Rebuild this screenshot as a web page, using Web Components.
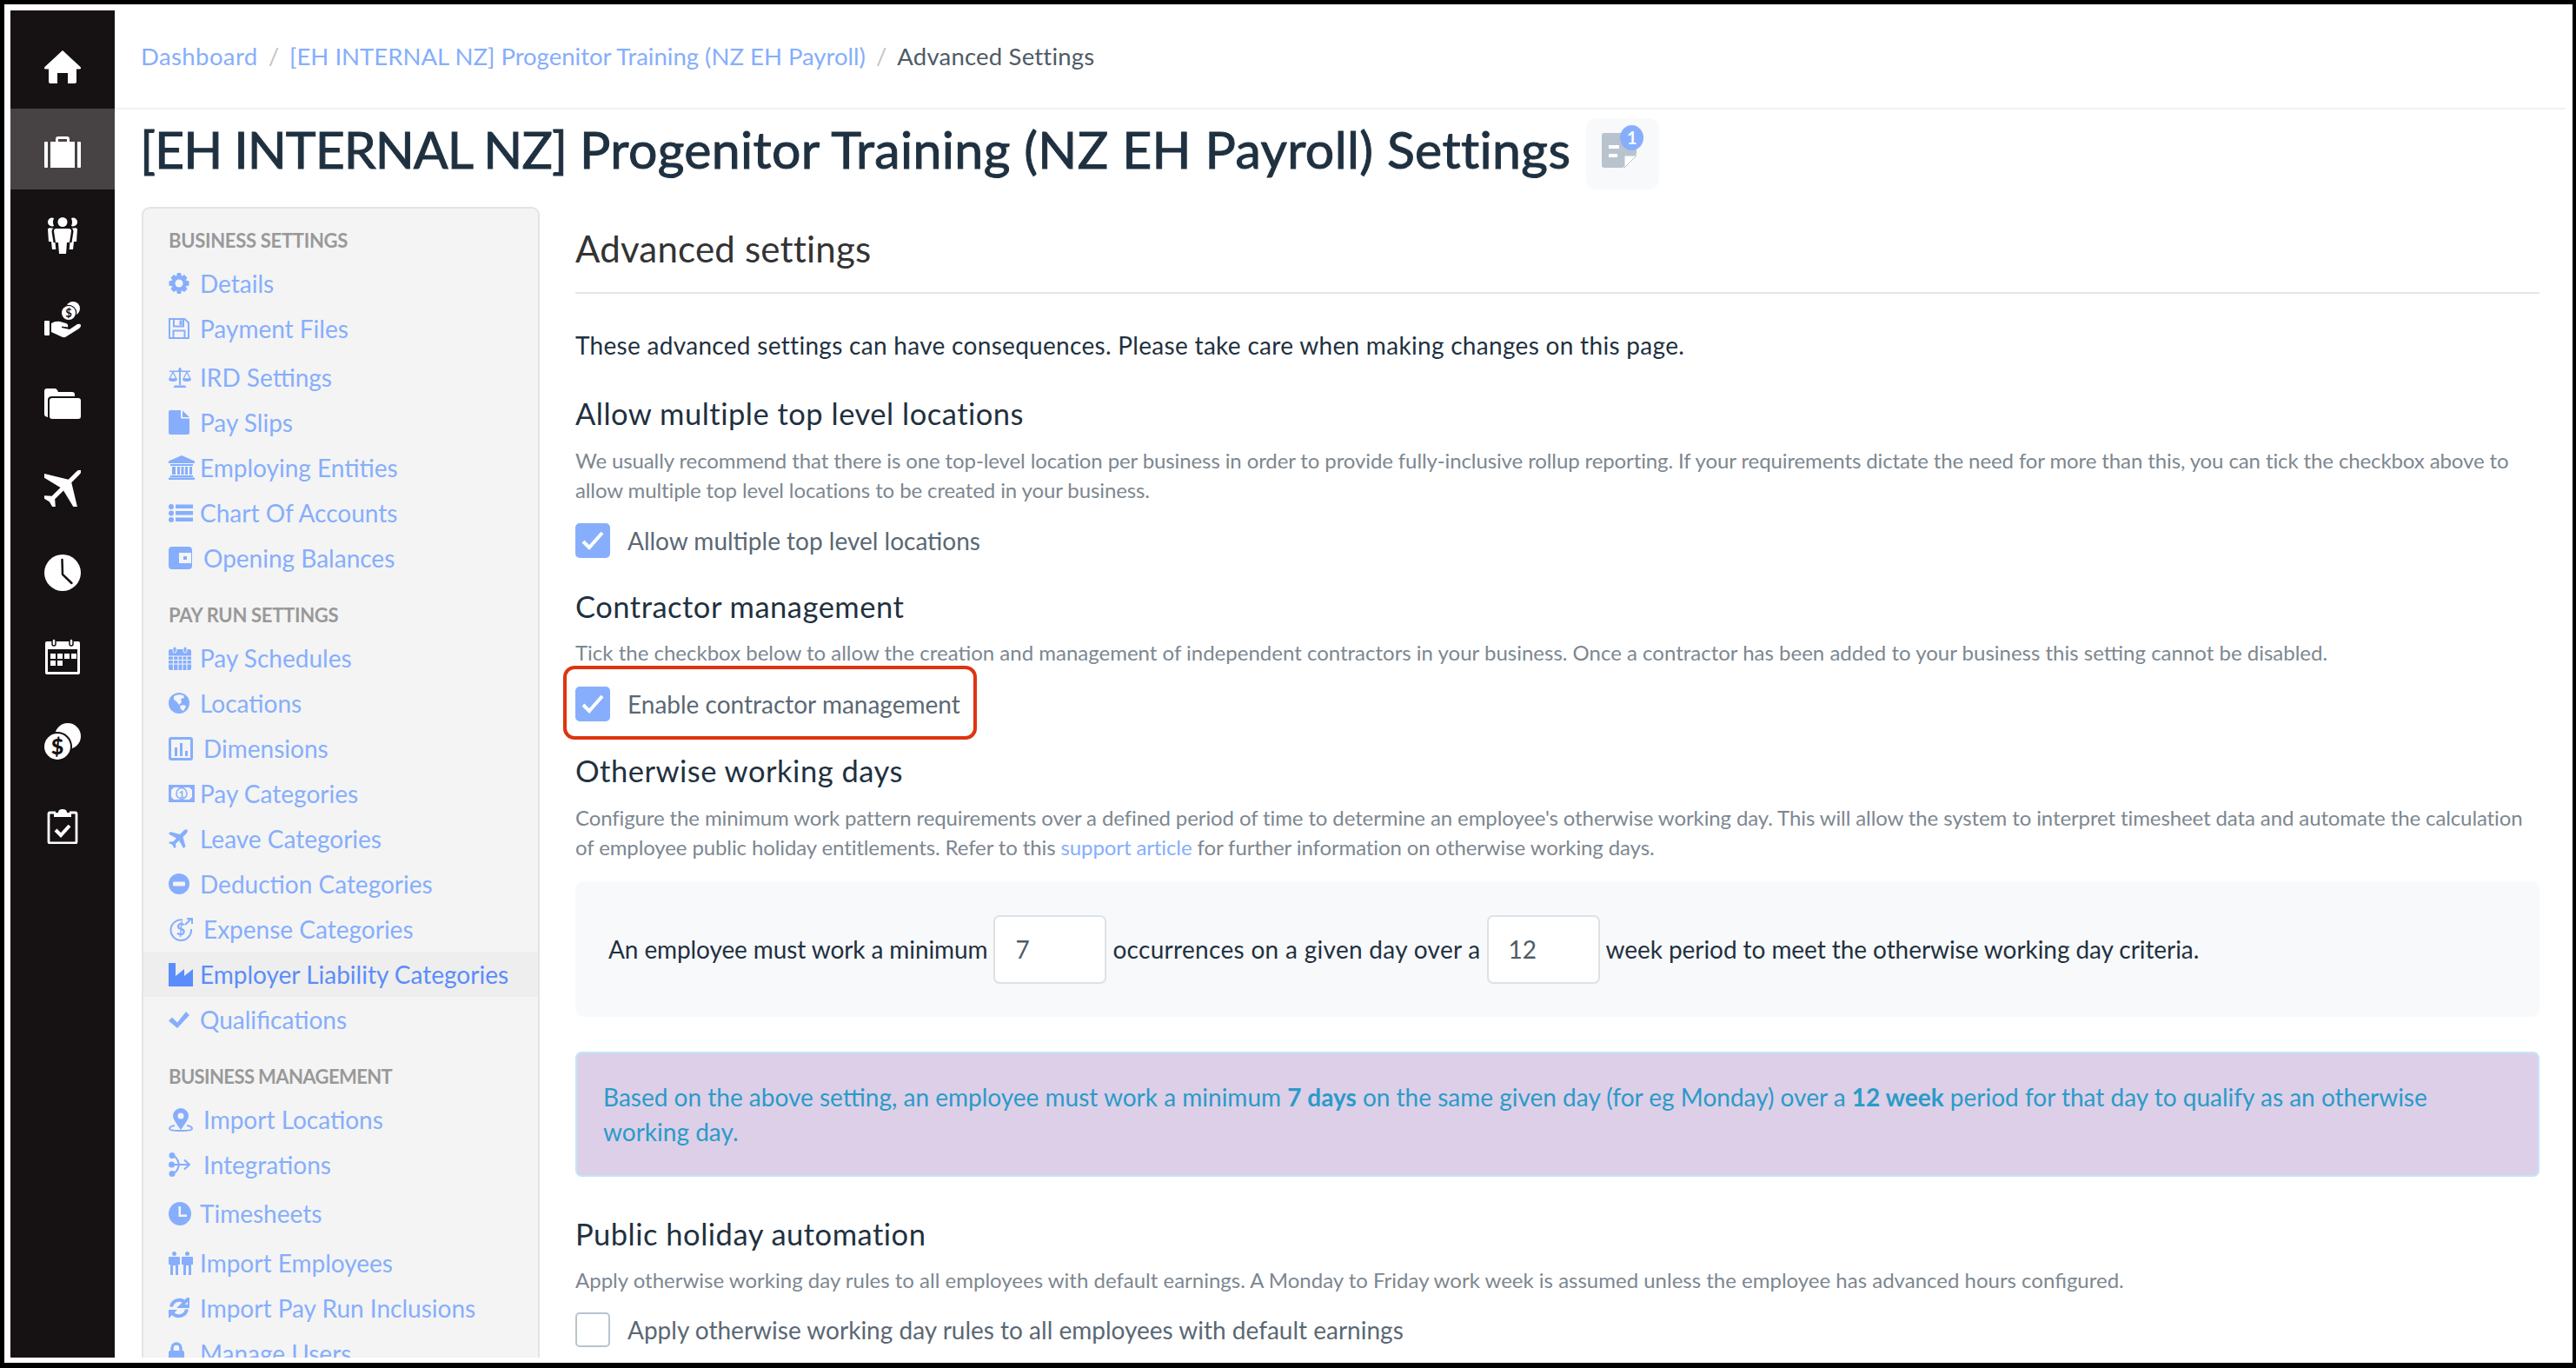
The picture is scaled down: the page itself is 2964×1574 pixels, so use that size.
<!DOCTYPE html>
<html lang="en">
<head>
<meta charset="utf-8">
<title>Advanced Settings</title>
<style>
  html, body { margin: 0; height: 100%; }
  body { background: #000; overflow: hidden; font-family: Lato, "Liberation Sans", sans-serif; }
  p { margin: 0; }
</style>
</head>
<body>
<app-frame>
  <nav-rail slot="rail">
    <rail-item icon="home"></rail-item>
    <rail-item icon="briefcase" active></rail-item>
    <rail-item icon="people3"></rail-item>
    <rail-item icon="handcoin"></rail-item>
    <rail-item icon="folder"></rail-item>
    <rail-item icon="plane"></rail-item>
    <rail-item icon="clockw"></rail-item>
    <rail-item icon="calw"></rail-item>
    <rail-item icon="coins"></rail-item>
    <rail-item icon="clipboard"></rail-item>
  </nav-rail>

  <bread-crumbs slot="crumbs">
    <a style="letter-spacing:.4px">Dashboard</a>
    <a>[EH INTERNAL NZ] Progenitor Training (NZ EH Payroll)</a>
    <span>Advanced Settings</span>
  </bread-crumbs>

  <page-title slot="title" count="1"><span style="letter-spacing:-1px">[EH INTERNAL NZ]</span> <span style="letter-spacing:.38px">Progenitor Training (NZ EH Payroll) Settings</span></page-title>

  <side-menu slot="menu">
    <menu-head>Business Settings</menu-head>
    <menu-item icon="gear">Details</menu-item>
    <menu-item icon="save">Payment Files</menu-item>
    <menu-item icon="scale" style="margin-top:4px">IRD Settings</menu-item>
    <menu-item icon="file">Pay Slips</menu-item>
    <menu-item icon="bank">Employing Entities</menu-item>
    <menu-item icon="list">Chart Of Accounts</menu-item>
    <menu-item icon="wallet" wide>Opening Balances</menu-item>
    <menu-head>Pay Run Settings</menu-head>
    <menu-item icon="cal">Pay Schedules</menu-item>
    <menu-item icon="globe">Locations</menu-item>
    <menu-item icon="chart" wide>Dimensions</menu-item>
    <menu-item icon="money">Pay Categories</menu-item>
    <menu-item icon="planes">Leave Categories</menu-item>
    <menu-item icon="minus">Deduction Categories</menu-item>
    <menu-item icon="expense" wide>Expense Categories</menu-item>
    <menu-item icon="factory" active>Employer Liability Categories</menu-item>
    <menu-item icon="check">Qualifications</menu-item>
    <menu-head style="letter-spacing:-.6px">Business Management</menu-head>
    <menu-item icon="pin" wide>Import Locations</menu-item>
    <menu-item icon="merge" wide>Integrations</menu-item>
    <menu-item icon="clock" style="margin-top:4px">Timesheets</menu-item>
    <menu-item icon="people2" style="margin-top:5px">Import Employees</menu-item>
    <menu-item icon="refresh">Import Pay Run Inclusions</menu-item>
    <menu-item icon="lock">Manage Users</menu-item>
  </side-menu>

  <settings-head>Advanced settings</settings-head>
  <p class="intro" style="margin:39px 0 0;font-size:28px;letter-spacing:.3px;line-height:40px;color:#1f3140">These advanced settings can have consequences. Please take care when making changes on this page.</p>

  <setting-section heading="Allow multiple top level locations" style="--top:37px;--body:21px;--track:-.11px">
    <span slot="desc">We usually recommend that there is one top-level location per business in order to provide fully-inclusive rollup reporting. If your requirements dictate the need for more than this, you can tick the checkbox above to<br>allow multiple top level locations to be created in your business.</span>
    <check-row checked>Allow multiple top level locations</check-row>
  </setting-section>

  <setting-section heading="Contractor management" style="--top:34px;--desc:14px">
    <span slot="desc">Tick the checkbox below to allow the creation and management of independent contractors in your business. Once a contractor has been added to your business this setting cannot be disabled.</span>
    <check-row checked highlight>Enable contractor management</check-row>
  </setting-section>

  <setting-section heading="Otherwise working days" style="--top:35px;--track:-.11px">
    <span slot="desc">Configure the minimum work pattern requirements over a defined period of time to determine an employee's otherwise working day. This will allow the system to interpret timesheet data and automate the calculation<br>of employee public holiday entitlements. Refer to this <a style="color:#86aefc">support article</a> for further information on otherwise working days.</span>
    <work-pattern minimum="7" weeks="12"></work-pattern>
  </setting-section>

  <info-alert>Based on the above setting, an employee must work a minimum <b>7 days</b> on the same given day (for eg Monday) over a <b>12 week</b> period for that day to qualify as an otherwise<br>working day.</info-alert>

  <setting-section heading="Public holiday automation" style="--top:44px;--desc:14px;--body:20px">
    <span slot="desc">Apply otherwise working day rules to all employees with default earnings. A Monday to Friday work week is assumed unless the employee has advanced hours configured.</span>
    <check-row>Apply otherwise working day rules to all employees with default earnings</check-row>
  </setting-section>
</app-frame>

<script>
const BG = '#f4f4f4';
const DK = '#161213';
const ICONS = {
  // rail, white
  home: [42, 42, `<path d="M21 2L41.500 21q1.500 2-1 2.500H37V38q0 2-2 2h-8V28H15v12H7q-2 0-2-2V23.500H1.500q-2.500-.5-1-2.500z"/>`],
  briefcase: [42, 42, `<path fill-rule="evenodd" d="M7 10h6V7q0-3 3-3h10q3 0 3 3v3h6v30H7zM16 10h10V7H16z"/><rect x="0" y="10" width="4" height="30" rx="1"/><rect x="38" y="10" width="4" height="30" rx="1"/>`],
  people3: [42, 42, `<circle cx="21" cy="5.500" r="5.500"/><path d="M9 .5a5 5 0 0 0 0 10q1.500 0 2-.7-2-4 0-8.600Q10 .5 9 .5zM33 .5a5 5 0 0 1 0 10q-1.500 0-2-.7 2-4 0-8.600Q32 .5 33 .5z"/><path d="M14 13h14q3 0 3 3l-2 13h-3l-1 13h-8l-1-13h-3l-2-13q0-3 3-3z"/><path d="M7 12.500h3.500q-2 1-2 4l2 12.500h2l.8 8h-4.300l-1-9H5l-1-14.500q0-1 3-1.500zM35 12.500h-3.500q2 1 2 4l-2 12.500h-2l-.8 8h4.300l1-9H37l1-14.500q0-1-3-1.500z"/>`],
  handcoin: [42, 42, `<rect x="0" y="22" width="6" height="17" rx="1"/><path d="M8 25q5-3 10-2l7 2q3 1 2 4.500l-7-1v1.500l9 2 9-6q3-1 4 1 .5 2-2 4L24 41q-2 .5-4-.5L8 35z"/><circle cx="33" cy="8" r="8"/><circle cx="28" cy="13" r="9.300" fill="${DK}"/><circle cx="28" cy="13" r="8"/><text x="28" y="18" font-size="13" font-weight="700" text-anchor="middle" fill="${DK}" font-family="Lato">$</text>`],
  folder: [42, 42, `<path d="M0 6q0-3 3-3h9q2 0 3 2l1 2h16q3 0 3 3v2H9q-5 0-5 4v20q-4-1-4-3z"/><path d="M9 14h30q3 0 3 3v18q0 3-3 3H9q-3 0-3-3V17q0-3 3-3z"/>`],
  plane: [42, 42, `<g transform="translate(21 21) rotate(45)"><path d="M0-30q2.500 0 2.500 6v12L27 3v4L2.500 1v14l7 6v3L0 21.500-9.500 24v-3l7-6V1L-27 7V3L-2.500-12v-12q0-6 2.500-6z"/></g>`],
  clockw: [42, 42, `<circle cx="21" cy="21" r="21"/><path d="M20.500 6l.5 17 10.500 10" fill="none" stroke="${DK}" stroke-width="2.500" stroke-linecap="round"/>`],
  calw: [42, 42, `<rect x="1" y="3" width="40" height="38" rx="2"/><rect x="4" y="12" width="34" height="26" fill="${DK}"/><rect x="9" y="0" width="4" height="8" rx="2" stroke="${DK}" stroke-width="1.500"/><rect x="29" y="0" width="4" height="8" rx="2" stroke="${DK}" stroke-width="1.500"/><path d="M7 17h6v6H7zM15 17h6v6h-6zM23 17h6v6h-6zM31 17h6v6h-6zM7 25h6v6H7zM15 25h6v6h-6z"/>`],
  coins: [42, 42, `<circle cx="27" cy="15" r="15"/><circle cx="15" cy="27" r="17" fill="${DK}"/><circle cx="15" cy="27" r="15"/><text x="15" y="36" font-size="25" font-weight="900" text-anchor="middle" fill="${DK}" font-family="Lato">$</text>`],
  clipboard: [42, 42, `<path d="M13 6H6.500q-1.500 0-1.500 1.500V39.500q0 1.500 1.500 1.500h29q1.500 0 1.500-1.500V7.500Q37 6 35.500 6H29" fill="none" stroke="#fff" stroke-width="2.800"/><path d="M11 9V6h5q0-4 5-4t5 4h5v5H11z"/><path d="M13 26l6 6 10-11" fill="none" stroke="#fff" stroke-width="4"/>`],
  // side menu, currentColor
  gear: [24, 24, `<path d="M10 0h4l1 4 3-2 3.500 3.500-2 3 4 1v5l-4 1 2 3L18 22l-3-2-1 4h-4l-1-4-3 2-3.500-3.500 2-3-4-1v-5l4-1-2-3L6 2l3 2z"/><circle cx="12" cy="12" r="4.500" fill="${BG}"/>`],
  save: [24, 24, `<path d="M1 1h17.500L23 5.500V23H1z" fill="none" stroke="currentColor" stroke-width="2"/><path d="M6 1.500v8h11v-8" fill="none" stroke="currentColor" stroke-width="2"/><path d="M12.500 2.500h3v5.500h-3z"/><path d="M5.500 23v-8.500h13V23" fill="none" stroke="currentColor" stroke-width="2"/>`],
  scale: [26, 24, `<path d="M12 1h2v20h-2zM1 4.500h24v1.500H1zM7 21.500h12l1.500 2.500h-15z"/><circle cx="13" cy="4" r="2"/><path d="M5 6l4 8H1zM21 6l4 8h-8z" fill="none" stroke="currentColor" stroke-width="1.300"/><path d="M0 14h10q0 3-5 3t-5-3zM16 14h10q0 3-5 3t-5-3z"/>`],
  file: [24, 28, `<path d="M0 2q0-2 2-2h12v8q0 1.500 1.500 1.500H24V26q0 2-2 2H2q-2 0-2-2z"/><path d="M16 0.500l8 7.500h-8z"/>`],
  bank: [30, 28, `<path d="M15 0l15 6.500V9H0V6.500zM2 10h26v2H2zM4 13h4v9H4zM10 13h3v9h-3zM14.500 13h3v9h-3zM19 13h3v9h-3zM24 13h3v9h-3zM2 23h26v2H2zM0 25.500h30V28H0z"/>`],
  list: [28, 21, `<circle cx="3" cy="3" r="3"/><circle cx="3" cy="10.500" r="3"/><circle cx="3" cy="18" r="3"/><path d="M8 .5h20v4.500H8zM8 8h20v4.500H8zM8 15.500h20V20H8z"/>`],
  wallet: [28, 27, `<rect width="27" height="26" rx="4"/><rect x="12" y="7" width="14" height="12" fill="${BG}"/><rect x="17" y="11" width="4" height="4"/>`],
  cal: [26, 27, `<rect x="0" y="3" width="26" height="24" rx="2"/><path d="M0 11h26M0 15.500h26M0 20h26M5.500 11v16M11 11v16M16 11v16M21 11v16" stroke="${BG}" stroke-width="1.100"/><rect x="5" y="0" width="4" height="7" rx="2" stroke="${BG}"/><rect x="17" y="0" width="4" height="7" rx="2" stroke="${BG}"/>`],
  globe: [24, 24, `<circle cx="12" cy="12" r="12"/><path d="M6 4q5-3 11-1l1 3-4 1 1 4-3 3-3-4-3-2zM13 15l5-1 2 2-3 5-3-2z" fill="${BG}"/>`],
  chart: [28, 27, `<path fill-rule="evenodd" d="M3 0h22q3 0 3 3v21q0 3-3 3H3q-3 0-3-3V3q0-3 3-3zM3 3v21h22V3z"/><path d="M7 12h3v10H7zM13 7h3v15h-3zM19 16h3v6h-3z"/>`],
  money: [30, 20, `<path fill-rule="evenodd" d="M0 0h30v20H0zM6 3L3 6v8l3 3h18l3-3V6l-3-3z"/><ellipse cx="15" cy="10" rx="6" ry="6.500" fill="${BG}" stroke="currentColor" stroke-width="1.500"/><text x="15" y="14.500" font-size="12" font-weight="700" text-anchor="middle" fill="currentColor" font-family="Lato">1</text>`],
  planes: [22, 22, `<path d="M21.500.5q1 2-1 4.500l-4 4 3 11-2.500 2-5-9-4 4 .5 3.500-1.800 1.800-2.500-4.500L0 16l1.800-1.800L5 14.500l4-4L0 5.500l2-2.500 11 3 4-4q2.500-2.500 4.500-1.500z"/>`],
  minus: [24, 24, `<circle cx="12" cy="12" r="12"/><rect x="5" y="9.500" width="14" height="5" rx="1" fill="${BG}"/>`],
  expense: [28, 27, `<path d="M16 2.500A11.800 11.800 0 1 0 26 13" fill="none" stroke="currentColor" stroke-width="2"/><path d="M19 8l7-7M21 1h6v6" fill="none" stroke="currentColor" stroke-width="2"/><text x="14" y="20" font-size="18" font-weight="700" text-anchor="middle" fill="currentColor" font-family="Lato">$</text>`],
  factory: [28, 27, `<path d="M0 0h8v15l10-8v8l10-8v20H0z"/>`],
  check: [24, 19, `<path d="M0 10.500L4 6.500l6 6L20 0l4 4L10 19z"/>`],
  pin: [28, 27, `<path fill-rule="evenodd" d="M14 0a9 9 0 0 1 9 9q0 4-9 16-9-12-9-16a9 9 0 0 1 9-9zM14 5.500a3.500 3.500 0 1 0 0 7 3.500 3.500 0 0 0 0-7z"/><path d="M7 20Q1 21 1 23.500 1 26 14 26t13-2.500Q27 21 21 20" fill="none" stroke="currentColor" stroke-width="2"/>`],
  merge: [25, 28, `<circle cx="4" cy="3.500" r="3.500"/><circle cx="3.500" cy="14" r="3.500"/><circle cx="4" cy="24.500" r="3.500"/><path d="M4 3.500q6 1 8 10.500M4 24.500q6-1 8-10.500M3 14h19M18 8.500l6 5.500-6 5.500" fill="none" stroke="currentColor" stroke-width="2.200"/>`],
  clock: [26, 27, `<ellipse cx="13" cy="13.500" rx="13" ry="13.500"/><path d="M11.500 5h2.500v9.500H21V17h-9.500z" fill="${BG}"/>`],
  people2: [28, 27, `<circle cx="6.500" cy="2.500" r="2.500"/><circle cx="21.500" cy="2.500" r="2.500"/><path d="M1 6h11q1 0 1 1v8h-2v12H8V16H5v11H2V15H0V7q0-1 1-1zM16 6h11q1 0 1 1v8h-2v12h-3V16h-3v11h-3V15h-2V7q0-1 1-1z"/>`],
  refresh: [24, 24, `<path d="M3 10.500A9.500 9.500 0 0 1 19.500 6" fill="none" stroke="currentColor" stroke-width="4"/><path d="M24 0v10H14zM21 13.500A9.500 9.500 0 0 1 4.500 18" fill="none" stroke="currentColor" stroke-width="4"/><path d="M0 24V14h10z"/>`],
  lock: [18, 26, `<path d="M4 11V7a5 5 0 0 1 10 0v4" fill="none" stroke="currentColor" stroke-width="3.500"/><rect x="0" y="10" width="18" height="16" rx="2"/>`]
};

function iconSvg(name, scale = 1) {
  const [w, h, body] = ICONS[name];
  return `<svg width="${w * scale}" height="${h * scale}" viewBox="0 0 ${w} ${h}" fill="currentColor" style="display:block;flex:none">${body}</svg>`;
}

function define(tag, css, html, setup) {
  customElements.define(tag, class extends HTMLElement {
    connectedCallback() {
      if (this.shadowRoot) return;
      this.attachShadow({ mode: 'open' });
      this.shadowRoot.innerHTML = `<style>${css}</style>` + (typeof html === 'function' ? html(this) : html);
      if (setup) setup(this);
    }
  });
}

define('app-frame', `
  :host { display: block; height: 1574px; box-sizing: border-box; padding: 5px 4px 6px 5px; }
  .sheet { height: 100%; box-sizing: border-box; padding: 7px 8px 6px 7px; background: #fff; display: flex; }
  .main { flex: 1; min-width: 0; display: flex; flex-direction: column; }
  .crumbs { height: 104px; padding-bottom: 8px; flex: none; border-bottom: 2px solid #f2f2f2; display: flex; align-items: center; padding-left: 30px; }
  .title { flex: none; height: 112px; padding-left: 29px; display: flex; align-items: center; }
  .body { flex: 1; min-height: 0; display: flex; gap: 41px; padding: 0 30px 0 31px; overflow: hidden; }
  .menu { flex: none; width: 458px; display: flex; min-height: 0; }
  .content { flex: 1; min-width: 0; }
`, `
  <div class="sheet">
    <slot name="rail"></slot>
    <div class="main">
      <div class="crumbs"><slot name="crumbs"></slot></div>
      <div class="title"><slot name="title"></slot></div>
      <div class="body">
        <div class="menu"><slot name="menu"></slot></div>
        <div class="content"><slot></slot></div>
      </div>
    </div>
  </div>`);

define('nav-rail', `
  :host { display: flex; flex-direction: column; flex: none; width: 120px; box-sizing: border-box; padding-top: 16px; gap: 4px; background: ${DK}; }
`, `<slot></slot>`);

define('rail-item', `
  :host { display: flex; height: 93px; box-sizing: border-box; padding-top: 5px; align-items: center; justify-content: center; color: #fff; }
  :host([active]) { background: #474344; }
`, el => iconSvg(el.getAttribute('icon')));

define('bread-crumbs', `
  :host { display: flex; font-size: 27.500px; color: #4f5b66; }
  ::slotted(a) { color: #86aefc; }
  ::slotted(a)::after { content: "/"; color: #c4c4c4; margin: 0 12px; letter-spacing: 0; }
  ::slotted(span) { letter-spacing: .2px; }
`, `<slot></slot>`);

define('page-title', `
  :host { display: flex; align-items: center; height: 92px; margin-bottom: 22px; font-size: 59px; -webkit-text-stroke: 1px #1f3140; color: #1f3140; white-space: pre; }
  .badge { position: relative; margin-left: 18px; width: 84px; height: 82px; margin-top: 12px; background: #f8f9fb; border-radius: 12px; flex: none; -webkit-text-stroke: 0; }
  .doc { position: absolute; left: 18px; top: 17px; }
  .count { position: absolute; left: 39px; top: 8px; width: 27px; height: 29px; border-radius: 50%; background: #86aefc; color: #fff; font-size: 20px; font-weight: 700; line-height: 29px; text-align: center; }
  .t { white-space: pre; }
`, el => `<span class="t"><slot></slot></span>
  <span class="badge">
    <svg class="doc" width="40" height="40" viewBox="0 0 40 40"><path d="M3 0h37v24L24 40H3q-3 0-3-3V3q0-3 3-3z" fill="#b9c3cd"/><path d="M8 14h12v4H8zM8 24h10v4H8z" fill="#fff"/><path d="M26 26h14L26 40z" fill="#fff" stroke="#b9c3cd"/></svg>
    <span class="count">${el.getAttribute('count')}</span>
  </span>`);

define('side-menu', `
  :host { display: block; width: 100%; box-sizing: border-box; padding-top: 14px; background: ${BG}; border: 2px solid #e4e4e4; border-bottom: 0; border-radius: 9px 9px 0 0; overflow: hidden; }
`, `<slot></slot>`);

define('menu-head', `
  :host { display: block; height: 46px; line-height: 46px; margin-top: 17px; padding-left: 29px; font-size: 22px; font-weight: 700; letter-spacing: -.3px; color: #999; text-transform: uppercase; }
  :host(:first-child) { margin-top: 0; }
`, `<slot></slot>`);

define('menu-item', `
  :host { display: flex; height: 52px; align-items: center; padding-left: 29px; font-size: 28px; color: #86aefc; white-space: nowrap; }
  :host([active]) { background: #eee; color: #5b8cfb; }
  .slot { flex: none; width: 36px; }
  :host([wide]) .slot { width: 40px; }
`, el => `<span class="slot">${iconSvg(el.getAttribute('icon'))}</span><slot></slot>`);

define('settings-head', `
  :host { display: block; height: 100px; box-sizing: border-box; line-height: 96px; border-bottom: 2px solid #e6e6e6; font-size: 42px; letter-spacing: .2px; color: #333; }
`, `<slot></slot>`);

define('setting-section', `
  :host { display: block; margin-top: var(--top, 34px); }
  h3 { margin: 0; font-size: 34.500px; letter-spacing: .5px; font-weight: 400; line-height: 44px; color: #1f3140; }
  .desc { margin-top: var(--desc, 15px); font-size: 24px; letter-spacing: var(--track, 0); line-height: 34px; color: #7d8790; white-space: nowrap; }
  .body { margin-top: var(--body, 22px); }
`, el => `<h3>${el.getAttribute('heading')}</h3><div class="desc"><slot name="desc"></slot></div><div class="body"><slot></slot></div>`);

define('check-row', `
  :host { display: flex; width: fit-content; position: relative; align-items: center; gap: 20px; height: 40px; font-size: 28px; color: #5a6874; white-space: nowrap; }
  .box { width: 40px; height: 40px; box-sizing: border-box; border-radius: 5px; border: 2px solid #b9c3cd; background: #fff; flex: none; display: flex; align-items: center; justify-content: center; }
  :host([checked]) .box { background: #86aefc; border-color: #86aefc; }
  svg { display: none; }
  :host([checked]) svg { display: block; }
  :host([highlight])::after { content: ""; position: absolute; left: -14px; right: -19px; top: -24px; bottom: -21px; border: 4px solid #de3410; border-radius: 13px; pointer-events: none; }
`, `<span class="box"><svg width="26" height="22" viewBox="0 0 26 22"><path d="M2 12l7 7L24 2" fill="none" stroke="#fff" stroke-width="4"/></svg></span><slot></slot>`);

define('num-input', `
  :host { display: block; flex: none; width: 130px; height: 79px; box-sizing: border-box; border: 2px solid #dde2e6; border-radius: 7px; background: #fff; padding-left: 23px; line-height: 75px; font-size: 28px; color: #4f5b66; }
`, `<slot></slot>`);

define('work-pattern', `
  :host { display: flex; align-items: center; height: 156px; box-sizing: border-box; padding-left: 38px; gap: 7px; background: #f8f9fb; border-radius: 9px; font-size: 28px; color: #1f3140; white-space: nowrap; }
  .first { letter-spacing: -.1px; }
  .mid { letter-spacing: .3px; }
  .last { letter-spacing: -.07px; }
`, el => `<span class="first">An employee must work a minimum</span><num-input>${el.getAttribute('minimum')}</num-input><span class="mid">occurrences on a given day over a</span><num-input>${el.getAttribute('weeks')}</num-input><span class="last">week period to meet the otherwise working day criteria.</span>`);

define('info-alert', `
  :host { display: block; margin-top: 40px; height: 144px; box-sizing: border-box; padding: 30px 30px 0; border: 2px solid #bfe8f8; border-radius: 7px; background: #ddcfe8; font-size: 28px; line-height: 40px; color: #2a9bc9; white-space: nowrap; }
  ::slotted(b) { font-weight: 700; }
`, `<slot></slot>`);
</script>
</body>
</html>
